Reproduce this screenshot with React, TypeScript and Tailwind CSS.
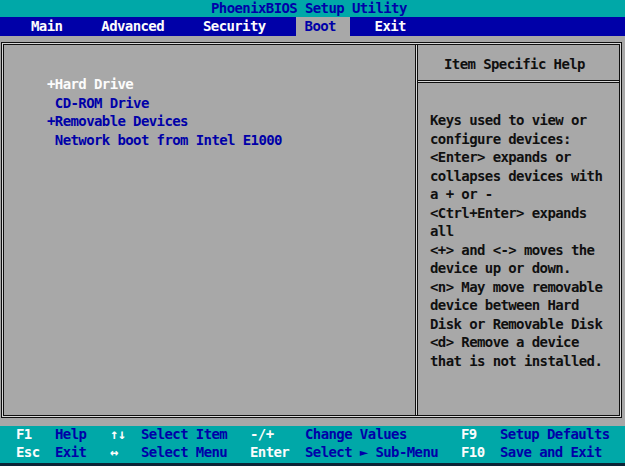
import React from "react";

const helpLines = [
  "Keys used to view or",
  "configure devices:",
  "<Enter> expands or",
  "collapses devices with",
  "a + or -",
  "<Ctrl+Enter> expands",
  "all",
  "<+> and <-> moves the",
  "device up or down.",
  "<n> May move removable",
  "device between Hard",
  "Disk or Removable Disk",
  "<d> Remove a device",
  "that is not installed.",
];

const bootItems = [
  { text: "+Hard Drive", selected: true },
  { text: " CD-ROM Drive", selected: false },
  { text: "+Removable Devices", selected: false },
  { text: " Network boot from Intel E1000", selected: false },
];

const footerRows = [
  ["F1", "Help", "↑↓", "Select Item", "-/+", "Change Values", "F9", "Setup Defaults"],
  ["Esc", "Exit", "↔", "Select Menu", "Enter", "Select ► Sub-Menu", "F10", "Save and Exit"],
];

export default function App() {
  return (
    <div className="w-[625px] h-[466px] overflow-hidden bg-[#a8a8a8] flex flex-col font-['DejaVu_Sans_Mono',monospace] text-[14px] tracking-[-0.6px] font-bold whitespace-pre">
      {/* Title bar */}
      <div className="h-[17px] bg-[#00a8a8] text-[#0000a8] leading-[16px] pl-[211px]">
        PhoenixBIOS Setup Utility
      </div>

      {/* Menu bar */}
      <div className="h-[19px] bg-[#0000a8] text-[#fcfcfc] flex leading-[19px]">
        <span className="ml-[31px]">Main</span>
        <span className="ml-[39px]">Advanced</span>
        <span className="ml-[39px]">Security</span>
        <span className="ml-[30px] w-[54px] pl-[9px] bg-[#a8a8a8] text-[#0000a8]">Boot</span>
        <span className="ml-[25px]">Exit</span>
      </div>

      {/* Body */}
      <div className="h-[390px] pt-[6px] pl-[1px]">
        <div className="w-[621px] h-[376px] border border-[#101010] p-[2px] shadow-[inset_0_0_0_1px_#d8d8d8,inset_0_0_0_2px_#101010] flex">
          {/* Left pane */}
          <div className="w-[411px] pt-[30px] pl-[43px] leading-[18.6px]">
            {bootItems.map((item) => (
              <div
                key={item.text}
                className={item.selected ? "text-[#fcfcfc]" : "text-[#0000a8]"}
              >
                {item.text}
              </div>
            ))}
          </div>

          {/* Divider */}
          <div className="w-[3px] border-x border-[#101010] bg-[#d8d8d8]" />

          {/* Help pane */}
          <div className="flex-1 flex flex-col text-[#101010]">
            <div className="h-[35px] pt-[10px] pl-[26px] leading-[18.6px]">
              Item Specific Help
            </div>
            <div className="h-[3px] border-y border-[#101010] bg-[#d8d8d8]" />
            <div className="pt-[28px] pl-[12px] leading-[18.5px]">
              {helpLines.map((line) => (
                <div key={line}>{line}</div>
              ))}
            </div>
          </div>
        </div>
      </div>

      {/* Footer */}
      <div className="h-[37px] bg-[#00a8a8] flex flex-col">
        {footerRows.map((row, i) => (
          <div
            key={i}
            className="h-[18px] leading-[16px] pl-[16px] grid grid-cols-[39px_55px_31px_109px_55px_156px_39px_1fr]"
          >
            {row.map((cell, j) => (
              <span key={j} className={j % 2 === 0 ? "text-[#fcfcfc]" : "text-[#0000a8]"}>
                {cell}
              </span>
            ))}
          </div>
        ))}
      </div>
      <div className="h-[3px] bg-[#0c2436]" />
    </div>
  );
}
